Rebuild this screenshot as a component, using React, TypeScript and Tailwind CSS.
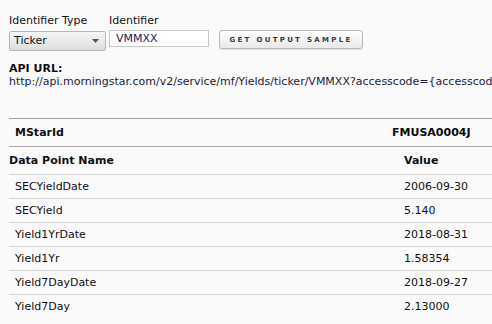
import React from "react";

const rows = [
  { name: "SECYieldDate", value: "2006-09-30" },
  { name: "SECYield", value: "5.140" },
  { name: "Yield1YrDate", value: "2018-08-31" },
  { name: "Yield1Yr", value: "1.58354" },
  { name: "Yield7DayDate", value: "2018-09-27" },
  { name: "Yield7Day", value: "2.13000" },
];

export default function App() {
  return (
    <div className="w-[492px] h-[324px] overflow-hidden bg-[#fafafa] text-[11px] leading-[14px] text-[#111] font-['DejaVu_Sans',Verdana,sans-serif]">
      {/* form */}
      <div className="flex items-start pt-[14px] pl-[9px]">
        <div className="flex flex-col">
          <label className="h-[14px]">Identifier Type</label>
          <div className="mt-[3px] w-[97px] h-[20px] flex items-center justify-between pl-[4px] pr-[6px] border border-[#b5b5b5] rounded-[2px] bg-gradient-to-b from-[#f6f6f6] to-[#dedede]">
            <span>Ticker</span>
            <svg width="7" height="4" viewBox="0 0 7 4">
              <path d="M0 0h7L3.5 4z" fill="#555" />
            </svg>
          </div>
        </div>
        <div className="flex flex-col ml-[3px]">
          <label className="h-[14px]">Identifier</label>
          <input
            className="mt-[2px] w-[100px] h-[17px] px-[6px] border border-[#c8c8c8] bg-white text-[11px] text-[#1a1a5a] outline-none"
            defaultValue="VMMXX"
          />
        </div>
        <button className="ml-[10px] mt-[16px] w-[144px] h-[19px] border border-[#b8b8b8] rounded-[3px] bg-gradient-to-b from-white to-[#e9e9e9] text-[7px] font-bold tracking-[2.3px] text-[#3a3a3a] shadow-[0_1px_0_#e0e0e0]">
          GET OUTPUT SAMPLE
        </button>
      </div>

      {/* api url */}
      <div className="pl-[9px] mt-[11px] whitespace-nowrap leading-[13px]">
        <div className="font-bold">API URL:</div>
        <div className="text-[#1a1a3a]">
          http://api.morningstar.com/v2/service/mf/Yields/ticker/VMMXX?accesscode=&#123;accesscode&#125;
        </div>
      </div>

      {/* table */}
      <div className="ml-[9px] mt-[30px] w-[500px]">
        <div className="flex items-center h-[28px] border-t border-[#9e9e9e] font-bold">
          <span className="pl-[6px] flex-1">MStarId</span>
          <span className="w-[117px] text-[#0a0a0a]">FMUSA0004J</span>
        </div>
        <div className="flex items-center h-[28px] border-t border-[#a8a8a8] font-bold">
          <span className="flex-1">Data Point Name</span>
          <span className="w-[105px]">Value</span>
        </div>
        {rows.map((r) => (
          <div key={r.name} className="flex items-center h-[24px] border-t border-[#d2d2d2]">
            <span className="pl-[6px] flex-1">{r.name}</span>
            <span className="w-[105px]">{r.value}</span>
          </div>
        ))}
      </div>
    </div>
  );
}
